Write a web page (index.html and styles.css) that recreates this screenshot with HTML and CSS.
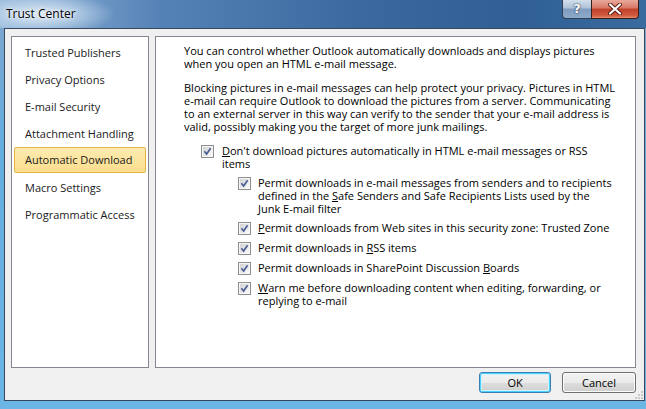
FILE: index.html
```
<!DOCTYPE html>
<html>
<head>
<meta charset="utf-8">
<link rel="stylesheet" href="styles.css">
</head>
<body>
<div class="window">
  <div class="titlebar">
    <span class="title">Trust Center</span>
    <div class="caption">
      <div class="cap-help">?</div>
      <div class="cap-close">
        <svg width="16" height="12" viewBox="0 0 16 12"><path d="M3 1.5 L13 10.5 M13 1.5 L3 10.5" stroke="#5a1a10" stroke-width="4" stroke-linecap="round"/><path d="M3 1.5 L13 10.5 M13 1.5 L3 10.5" stroke="#ffffff" stroke-width="2.2" stroke-linecap="round"/></svg>
      </div>
    </div>
  </div>
  <div class="frame">
    <div class="client">
      <div class="panels">
        <ul class="nav">
          <li class="nav-item">Trusted Publishers</li>
          <li class="nav-item">Privacy Options</li>
          <li class="nav-item">E-mail Security</li>
          <li class="nav-item">Attachment Handling</li>
          <li class="nav-item selected">Automatic Download</li>
          <li class="nav-item">Macro Settings</li>
          <li class="nav-item">Programmatic Access</li>
        </ul>
        <div class="content">
          <p class="para">You can control whether Outlook automatically downloads and displays pictures<br>when you open an HTML e-mail message.</p>
          <p class="para">Blocking pictures in e-mail messages can help protect your privacy. Pictures in HTML<br>e-mail can require Outlook to download the pictures from a server. Communicating<br>to an external server in this way can verify to the sender that your e-mail address is<br>valid, possibly making you the target of more junk mailings.</p>
          <div class="check main">
            <svg class="box" width="13" height="13" viewBox="0 0 13 13"><defs><linearGradient id="cg" x1="0" y1="0" x2="1" y2="1"><stop offset="0" stop-color="#d2d2d2"/><stop offset="1" stop-color="#fafafa"/></linearGradient></defs><rect x="0.5" y="0.5" width="12" height="12" fill="#f6f6f6" stroke="#8e8f8f"/><rect x="2" y="2" width="9" height="9" fill="url(#cg)"/><path d="M3.4 6.2 L5.6 9 L9.6 3.2" stroke="#4a5f96" stroke-width="1.7" fill="none"/></svg>
            <span class="label"><u>D</u>on't download pictures automatically in HTML e-mail messages or RSS<br>items</span>
          </div>
          <div class="check sub">
            <svg class="box" width="13" height="13" viewBox="0 0 13 13"><rect x="0.5" y="0.5" width="12" height="12" fill="#f6f6f6" stroke="#8e8f8f"/><rect x="2" y="2" width="9" height="9" fill="url(#cg)"/><path d="M3.4 6.2 L5.6 9 L9.6 3.2" stroke="#4a5f96" stroke-width="1.7" fill="none"/></svg>
            <span class="label">Permit downloads in e-mail messages from senders and to recipients<br>defined in the <u>S</u>afe Senders and Safe Recipients Lists used by the<br>Junk E-mail filter</span>
          </div>
          <div class="check sub">
            <svg class="box" width="13" height="13" viewBox="0 0 13 13"><rect x="0.5" y="0.5" width="12" height="12" fill="#f6f6f6" stroke="#8e8f8f"/><rect x="2" y="2" width="9" height="9" fill="url(#cg)"/><path d="M3.4 6.2 L5.6 9 L9.6 3.2" stroke="#4a5f96" stroke-width="1.7" fill="none"/></svg>
            <span class="label"><u>P</u>ermit downloads from Web sites in this security zone: Trusted Zone</span>
          </div>
          <div class="check sub">
            <svg class="box" width="13" height="13" viewBox="0 0 13 13"><rect x="0.5" y="0.5" width="12" height="12" fill="#f6f6f6" stroke="#8e8f8f"/><rect x="2" y="2" width="9" height="9" fill="url(#cg)"/><path d="M3.4 6.2 L5.6 9 L9.6 3.2" stroke="#4a5f96" stroke-width="1.7" fill="none"/></svg>
            <span class="label">Permit downloads in <u>R</u>SS items</span>
          </div>
          <div class="check sub">
            <svg class="box" width="13" height="13" viewBox="0 0 13 13"><rect x="0.5" y="0.5" width="12" height="12" fill="#f6f6f6" stroke="#8e8f8f"/><rect x="2" y="2" width="9" height="9" fill="url(#cg)"/><path d="M3.4 6.2 L5.6 9 L9.6 3.2" stroke="#4a5f96" stroke-width="1.7" fill="none"/></svg>
            <span class="label">Permit downloads in SharePoint Discussion <u>B</u>oards</span>
          </div>
          <div class="check sub">
            <svg class="box" width="13" height="13" viewBox="0 0 13 13"><rect x="0.5" y="0.5" width="12" height="12" fill="#f6f6f6" stroke="#8e8f8f"/><rect x="2" y="2" width="9" height="9" fill="url(#cg)"/><path d="M3.4 6.2 L5.6 9 L9.6 3.2" stroke="#4a5f96" stroke-width="1.7" fill="none"/></svg>
            <span class="label"><u>W</u>arn me before downloading content when editing, forwarding, or<br>replying to e-mail</span>
          </div>
        </div>
      </div>
      <div class="buttons">
        <button class="btn default">OK</button>
        <button class="btn">Cancel</button>
      </div>
      <svg class="grip" width="8" height="8" viewBox="0 0 8 8"><rect x="6" y="0" width="2" height="2" fill="#c8c8c8"/><rect x="3" y="3" width="2" height="2" fill="#c8c8c8"/><rect x="6" y="3" width="2" height="2" fill="#c8c8c8"/><rect x="0" y="6" width="2" height="2" fill="#c8c8c8"/><rect x="3" y="6" width="2" height="2" fill="#c8c8c8"/><rect x="6" y="6" width="2" height="2" fill="#c8c8c8"/></svg>
    </div>
  </div>
</div>
</body>
</html>
```

FILE: styles.css
```
html, body {
  margin: 0;
  padding: 0;
}
body {
  width: 646px;
  height: 409px;
  overflow: hidden;
  font-family: "Open Sans", "Noto Sans", sans-serif;
  font-size: 11px;
  color: #000;
}
.window {
  width: 646px;
  height: 409px;
  display: flex;
  flex-direction: column;
  background: #5fa8dc;
}
.titlebar {
  height: 28px;
  flex: none;
  display: flex;
  justify-content: space-between;
  align-items: flex-start;
  background:
    radial-gradient(ellipse 75px 22px at 40px 14px, rgba(225,235,245,0.95), rgba(200,220,240,0.55) 60%, rgba(200,220,240,0) 100%),
    linear-gradient(to right, #8fb4d8 0%, #5582b6 25%, #3a6aa0 55%, #2f5f95 80%, #3a6b9e 100%);
}
.title {
  font-size: 12px;
  line-height: 16px;
  margin: 6px 0 0 6px;
  color: #000;
  text-shadow: 0 0 6px #eef4fb, 0 0 3px #ffffff;
}
.caption {
  display: flex;
  margin-right: 7px;
}
.cap-help {
  width: 28px;
  height: 18px;
  border: 1px solid #2f4057;
  border-top: none;
  border-right: none;
  border-radius: 0 0 0 4px;
  background: linear-gradient(to bottom, #d3dfeb 0%, #aec2d8 45%, #7f9bbd 50%, #8eaacb 100%);
  color: #fff;
  font-family: "DejaVu Sans", sans-serif;
  font-weight: bold;
  font-size: 13px;
  line-height: 18px;
  text-align: center;
  text-shadow: 0 0 2px #22344d, 0 0 1px #22344d;
}
.cap-close {
  width: 46px;
  height: 18px;
  border: 1px solid #3a1e1a;
  border-top: none;
  border-radius: 0 0 4px 0;
  background: linear-gradient(to bottom, #e9a99c 0%, #d77865 45%, #c0412a 50%, #cf5a3f 85%, #e48a6e 100%);
  display: flex;
  align-items: center;
  justify-content: center;
}
.frame {
  flex: 1;
  display: flex;
  padding: 0 6px 8px 4px;
  background: linear-gradient(to bottom, #7aa7d0 0%, #64addf 30%, #6cb6e6 100%);
}
.client {
  flex: 1;
  position: relative;
  background: #f0f0f0;
  border: 1px solid #38485c;
  display: flex;
  flex-direction: column;
  padding: 7px 8px 7px 6px;
}
.panels {
  height: 332px;
  display: grid;
  grid-template-columns: 138px 1fr;
  column-gap: 6px;
}
.nav {
  list-style: none;
  margin: 0;
  padding: 2px 2px;
  background: #fff;
  border: 1px solid #828790;
}
.nav-item {
  height: 27px;
  line-height: 27px;
  padding-left: 11px;
  color: #1a1a1a;
  box-sizing: border-box;
  white-space: nowrap;
}
.nav-item.selected {
  height: 26px;
  line-height: 24px;
  margin: 0 0 1px 0;
  padding-left: 10px;
  border: 1px solid #e5b344;
  border-radius: 2px;
  background: linear-gradient(to bottom, #fdebb0 0%, #fcde8e 100%);
}
.content {
  background: #fff;
  border: 1px solid #828790;
  padding: 7px 20px 0 28px;
}
.para {
  margin: 0 0 11px 0;
  line-height: 13px;
  white-space: nowrap;
}
.check {
  display: flex;
  align-items: flex-start;
  line-height: 13px;
  white-space: nowrap;
}
.check .box {
  flex: none;
  margin-top: 1px;
}
.check.main {
  margin: 11px 0 6px 17px;
}
.check.main .label {
  margin-left: 8px;
}
.check.sub {
  margin: 0 0 6px 54px;
}
.check.sub .label {
  margin-left: 7px;
}
u {
  text-decoration: underline;
  text-underline-offset: 1px;
}
.buttons {
  display: flex;
  justify-content: flex-end;
  gap: 11px;
  margin-top: 4px;
  padding-right: 0;
}
.btn {
  height: 21px;
  width: 74px;
  padding: 0;
  font-family: "Open Sans", "Noto Sans", sans-serif;
  font-size: 11px;
  color: #000;
  border: 1px solid #707070;
  border-radius: 3px;
  background: linear-gradient(to bottom, #f2f2f2 0%, #ebebeb 50%, #dddddd 51%, #cfcfcf 100%);
  box-shadow: inset 0 0 0 1px #fbfbfb;
}
.btn.default {
  width: 72px;
  border-color: #3c7fb1;
  box-shadow: inset 0 0 0 1px #48d1ff, inset 0 0 0 2px #d4f2fd;
}
.grip {
  position: absolute;
  right: 1px;
  bottom: 1px;
}
```
